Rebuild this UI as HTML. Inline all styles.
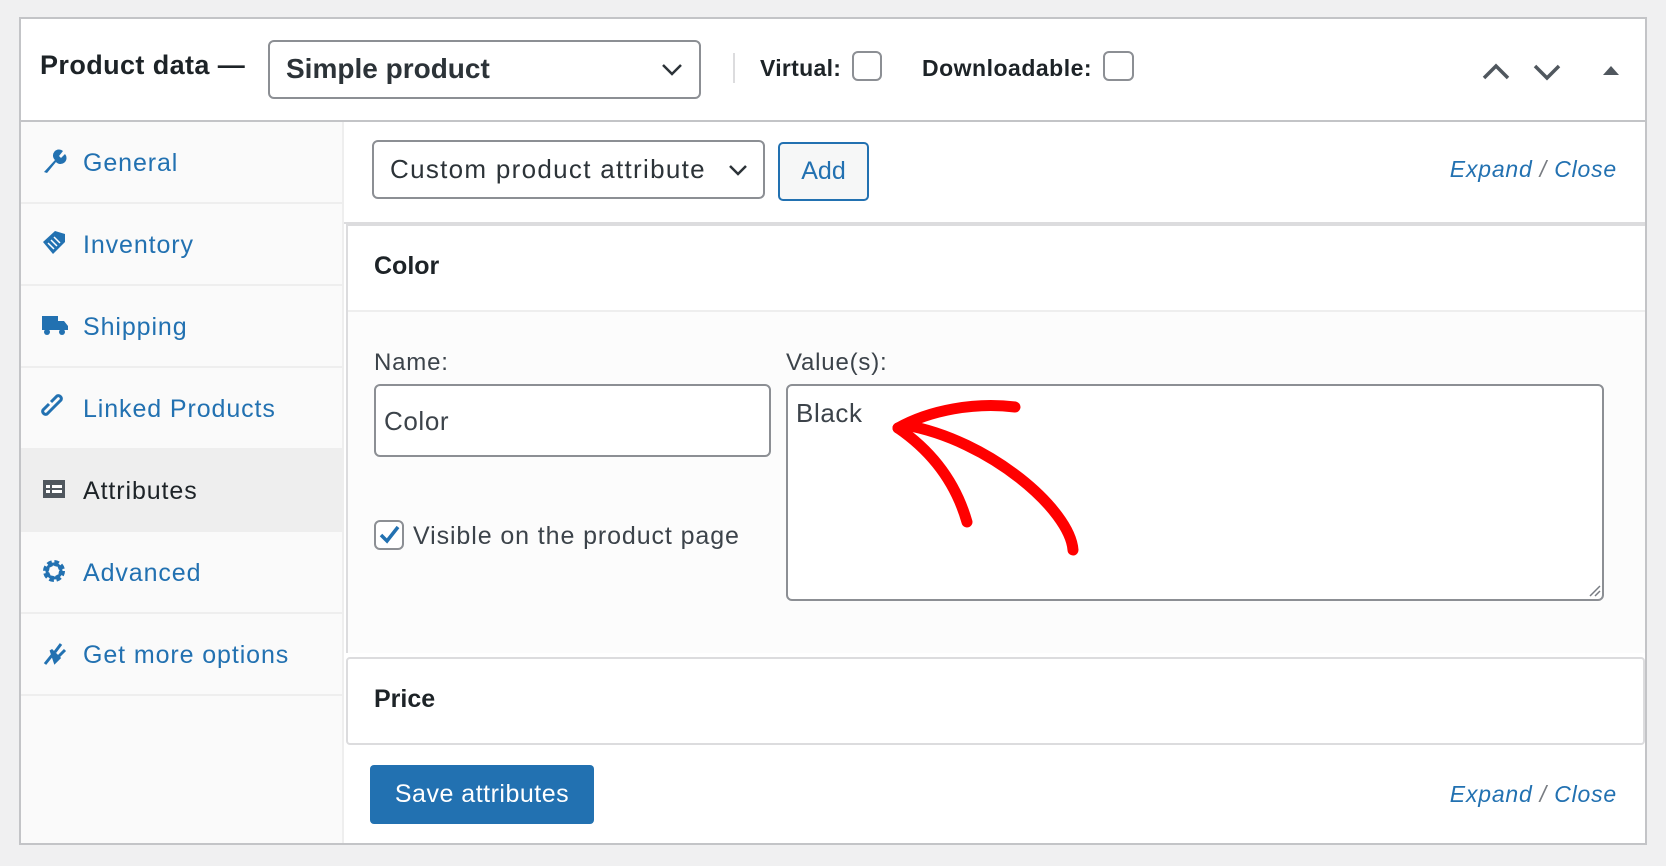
<!DOCTYPE html>
<html><head><meta charset="utf-8"><style>
*{box-sizing:border-box;margin:0;padding:0}
body{width:1666px;height:866px;background:#f0f0f1;font-family:"Liberation Sans",sans-serif;position:relative;overflow:hidden;color:#1d2327}
.a{position:absolute}
.panel{left:19px;top:17px;width:1628px;height:828px;background:#fff;border:2px solid #c3c4c7}
.blue{color:#2271b1}
.cb{border:2px solid #8c8f94;border-radius:6px;background:#fff}
.side{left:21px;top:122px;width:323px;height:721px;background:#fafafa;border-right:2px solid #eee}
.item{position:absolute;left:0;width:323px;height:82px;border-bottom:2px solid #eee;font-size:25px;color:#2271b1;letter-spacing:0.9px}
.item span{position:absolute;left:62px;top:27px}
.item svg{position:absolute;left:20px;top:26px}
</style></head><body>
<div class="a panel"></div>
<div class="a" style="left:40px;top:50px;font-size:27px;font-weight:bold;letter-spacing:0.4px">Product data —</div>
<div class="a" style="left:268px;top:40px;width:433px;height:59px;border:2px solid #8c8f94;border-radius:6px;background:#fff"></div>
<div class="a" style="left:286px;top:53px;font-size:28px;font-weight:bold;color:#2c3338">Simple product</div>
<svg class="a" style="left:660px;top:62px" width="24" height="16"><path d="M3 3 L12 12 L21 3" fill="none" stroke="#2c3338" stroke-width="2.5"/></svg>
<div class="a" style="left:733px;top:53px;width:2px;height:30px;background:#dcdcde"></div>
<div class="a" style="left:760px;top:55px;font-size:23px;font-weight:bold;letter-spacing:0.3px">Virtual:</div>
<div class="a cb" style="left:852px;top:51px;width:30px;height:30px"></div>
<div class="a" style="left:922px;top:55px;font-size:23px;font-weight:bold;letter-spacing:0.5px">Downloadable:</div>
<div class="a cb" style="left:1103px;top:51px;width:31px;height:30px"></div>
<svg class="a" style="left:1480px;top:58px" width="160" height="26"><path d="M4 20 L16 8 L28 20" fill="none" stroke="#50575e" stroke-width="3.5"/><path d="M55 8 L67 20 L79 8" fill="none" stroke="#50575e" stroke-width="3.5"/><path d="M123 17 L131 8 L139 17Z" fill="#50575e"/></svg>
<div class="a" style="left:21px;top:120px;width:1624px;height:2px;background:#c3c4c7"></div>

<div class="a side">
<div class="item" style="top:0"><svg width="26" height="26" viewBox="0 0 26 26"><path d="M3 24 L14 12 A6 6 0 0 1 22 3 L18 8 L20 10 L24 6 A6 6 0 0 1 15 14 L6 25Z" fill="#2271b1"/></svg><span>General</span></div>
<div class="item" style="top:82px"><svg width="26" height="26" viewBox="0 0 26 26"><path d="M2 12 L14 1 L24 4 L24 12 L12 24Z" fill="#2271b1"/><path d="M7 13 L13 19 M10 10 L16 16 M13 7 L19 13" stroke="#fff" stroke-width="1.5"/></svg><span>Inventory</span></div>
<div class="item" style="top:164px"><svg width="28" height="26" viewBox="0 0 28 26"><path d="M1 4 H17 V18 H1Z M17 9 H23 L27 14 V18 H17Z" fill="#2271b1"/><circle cx="6" cy="20" r="3" fill="#2271b1"/><circle cx="21" cy="20" r="3" fill="#2271b1"/></svg><span>Shipping</span></div>
<div class="item" style="top:246px"><svg width="26" height="26" viewBox="0 0 26 26"><path d="M11 15 L6 20 A3 3 0 0 1 2 16 L8 10 M15 11 L20 6 A3 3 0 0 0 16 2 L10 8 M9 17 L17 9" fill="none" stroke="#2271b1" stroke-width="3"/></svg><span>Linked Products</span></div>
<div class="item" style="top:328px;background:#eee;color:#1d2327"><svg width="26" height="26" viewBox="0 0 26 26"><rect x="2" y="4" width="22" height="18" fill="#50575e"/><rect x="5" y="9" width="4" height="3" fill="#fff"/><rect x="11" y="9" width="10" height="3" fill="#fff"/><rect x="5" y="14" width="4" height="3" fill="#fff"/><rect x="11" y="14" width="10" height="3" fill="#fff"/></svg><span>Attributes</span></div>
<div class="item" style="top:410px"><svg width="26" height="26" viewBox="0 0 26 26"><circle cx="13" cy="13" r="8" fill="none" stroke="#2271b1" stroke-width="6" stroke-dasharray="4 2.3"/><circle cx="13" cy="13" r="7" fill="none" stroke="#2271b1" stroke-width="3"/></svg><span>Advanced</span></div>
<div class="item" style="top:492px"><svg width="26" height="26" viewBox="0 0 26 26"><path d="M4 24 L12 14 M10 10 L18 18 L14 22 Z M14 12 L20 4 M18 16 L24 10" fill="#2271b1" stroke="#2271b1" stroke-width="3"/></svg><span>Get more options</span></div>
</div>

<div class="a" style="left:372px;top:140px;width:393px;height:59px;border:2px solid #8c8f94;border-radius:6px;background:#fff"></div>
<div class="a" style="left:390px;top:154px;font-size:26px;color:#2c3338;letter-spacing:1.3px">Custom product attribute</div>
<svg class="a" style="left:727px;top:163px" width="22" height="14"><path d="M3 3 L11 11 L19 3" fill="none" stroke="#2c3338" stroke-width="2.5"/></svg>
<div class="a" style="left:778px;top:142px;width:91px;height:59px;border:2px solid #2271b1;border-radius:5px;background:#f6f7f7;color:#2271b1;font-size:25px;text-align:center;line-height:55px">Add</div>
<div class="a blue" style="right:49px;top:156px;font-size:23px;font-style:italic;letter-spacing:0.8px">Expand <span style="color:#787c82">/</span> Close</div>
<div class="a" style="left:344px;top:222px;width:1301px;height:2px;background:#dcdcde"></div>

<div class="a" style="left:346px;top:224px;width:1299px;height:429px;background:#fcfcfc;border:2px solid #dcdcde;border-right:none;border-bottom:none"></div>
<div class="a" style="left:348px;top:226px;width:1297px;height:86px;background:#fff;border-bottom:2px solid #eee"></div>
<div class="a" style="left:374px;top:252px;font-size:25px;font-weight:bold">Color</div>
<div class="a" style="left:374px;top:349px;font-size:24px;color:#3c434a;letter-spacing:0.8px">Name:</div>
<div class="a" style="left:786px;top:349px;font-size:24px;color:#3c434a;letter-spacing:0.8px">Value(s):</div>
<div class="a" style="left:374px;top:384px;width:397px;height:73px;border:2px solid #8c8f94;border-radius:6px;background:#fff"></div>
<div class="a" style="left:384px;top:406px;font-size:26px;color:#3c434a;letter-spacing:0.6px">Color</div>
<div class="a" style="left:786px;top:384px;width:818px;height:217px;border:2px solid #8c8f94;border-radius:6px;background:#fff"></div>
<div class="a" style="left:796px;top:398px;font-size:26px;color:#3c434a;letter-spacing:0.6px">Black</div>
<svg class="a" style="left:1588px;top:584px" width="14" height="14"><path d="M2 12 L12 2 M7 12 L12 7" stroke="#787c82" stroke-width="1.5"/></svg>
<div class="a cb" style="left:374px;top:520px;width:30px;height:30px"></div>
<svg class="a" style="left:376px;top:522px" width="26" height="26"><path d="M5 13 L11 19 L22 5" fill="none" stroke="#2271b1" stroke-width="3.5"/></svg>
<div class="a" style="left:413px;top:522px;font-size:25px;color:#3c434a;letter-spacing:0.9px">Visible on the product page</div>

<svg class="a" style="left:0;top:0" width="1666" height="866"><g fill="none" stroke="#f00" stroke-width="11" stroke-linecap="round"><path d="M898 428 C930 410 975 402 1015 407"/><path d="M898 428 C930 450 955 480 967 522"/><path d="M905 425 C990 440 1070 510 1073 550"/></g></svg>

<div class="a" style="left:346px;top:657px;width:1299px;height:88px;background:#fff;border:2px solid #dcdcde;border-radius:4px"></div>
<div class="a" style="left:374px;top:685px;font-size:25px;font-weight:bold">Price</div>
<div class="a" style="left:370px;top:765px;width:224px;height:59px;background:#2271b1;border-radius:4px;color:#fff;font-size:25px;text-align:center;line-height:59px;letter-spacing:0.5px">Save attributes</div>
<div class="a blue" style="right:49px;top:781px;font-size:23px;font-style:italic;letter-spacing:0.8px">Expand <span style="color:#787c82">/</span> Close</div>
</body></html>
